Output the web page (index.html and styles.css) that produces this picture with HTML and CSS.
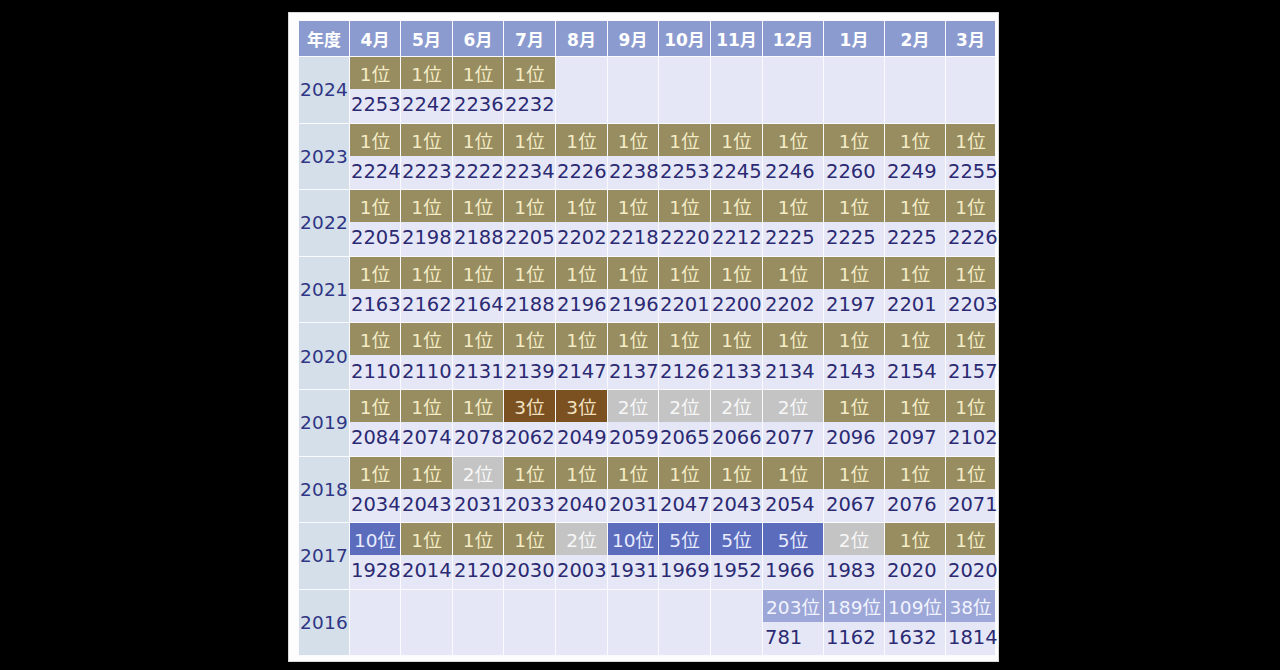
FILE: index.html
```html
<!DOCTYPE html>
<html lang="ja">
<head>
<meta charset="utf-8">
<title>順位表</title>
<link rel="stylesheet" href="styles.css">
</head>
<body>
<div class="panel">
<table class="rank">
<colgroup>
<col class="c-y"><col class="c-a"><col class="c-b"><col class="c-a"><col class="c-b"><col class="c-b"><col class="c-a"><col class="c-b"><col class="c-b"><col class="c-w"><col class="c-w"><col class="c-w"><col class="c-z">
</colgroup>
<thead>
<tr class="head"><th>年度</th><th>4月</th><th>5月</th><th>6月</th><th>7月</th><th>8月</th><th>9月</th><th>10月</th><th>11月</th><th>12月</th><th>1月</th><th>2月</th><th>3月</th></tr>
</thead>
<tbody>
<tr class="badges"><th class="year" rowspan="2">2024</th><td class="r1">1位</td><td class="r1">1位</td><td class="r1">1位</td><td class="r1">1位</td><td></td><td></td><td></td><td></td><td></td><td></td><td></td><td></td></tr>
<tr class="nums"><td>2253</td><td>2242</td><td>2236</td><td>2232</td><td></td><td></td><td></td><td></td><td></td><td></td><td></td><td></td></tr>

<tr class="badges"><th class="year" rowspan="2">2023</th><td class="r1">1位</td><td class="r1">1位</td><td class="r1">1位</td><td class="r1">1位</td><td class="r1">1位</td><td class="r1">1位</td><td class="r1">1位</td><td class="r1">1位</td><td class="r1">1位</td><td class="r1">1位</td><td class="r1">1位</td><td class="r1">1位</td></tr>
<tr class="nums"><td>2224</td><td>2223</td><td>2222</td><td>2234</td><td>2226</td><td>2238</td><td>2253</td><td>2245</td><td>2246</td><td>2260</td><td>2249</td><td>2255</td></tr>

<tr class="badges"><th class="year" rowspan="2">2022</th><td class="r1">1位</td><td class="r1">1位</td><td class="r1">1位</td><td class="r1">1位</td><td class="r1">1位</td><td class="r1">1位</td><td class="r1">1位</td><td class="r1">1位</td><td class="r1">1位</td><td class="r1">1位</td><td class="r1">1位</td><td class="r1">1位</td></tr>
<tr class="nums"><td>2205</td><td>2198</td><td>2188</td><td>2205</td><td>2202</td><td>2218</td><td>2220</td><td>2212</td><td>2225</td><td>2225</td><td>2225</td><td>2226</td></tr>

<tr class="badges"><th class="year" rowspan="2">2021</th><td class="r1">1位</td><td class="r1">1位</td><td class="r1">1位</td><td class="r1">1位</td><td class="r1">1位</td><td class="r1">1位</td><td class="r1">1位</td><td class="r1">1位</td><td class="r1">1位</td><td class="r1">1位</td><td class="r1">1位</td><td class="r1">1位</td></tr>
<tr class="nums"><td>2163</td><td>2162</td><td>2164</td><td>2188</td><td>2196</td><td>2196</td><td>2201</td><td>2200</td><td>2202</td><td>2197</td><td>2201</td><td>2203</td></tr>

<tr class="badges"><th class="year" rowspan="2">2020</th><td class="r1">1位</td><td class="r1">1位</td><td class="r1">1位</td><td class="r1">1位</td><td class="r1">1位</td><td class="r1">1位</td><td class="r1">1位</td><td class="r1">1位</td><td class="r1">1位</td><td class="r1">1位</td><td class="r1">1位</td><td class="r1">1位</td></tr>
<tr class="nums"><td>2110</td><td>2110</td><td>2131</td><td>2139</td><td>2147</td><td>2137</td><td>2126</td><td>2133</td><td>2134</td><td>2143</td><td>2154</td><td>2157</td></tr>

<tr class="badges"><th class="year" rowspan="2">2019</th><td class="r1">1位</td><td class="r1">1位</td><td class="r1">1位</td><td class="r3">3位</td><td class="r3">3位</td><td class="r2">2位</td><td class="r2">2位</td><td class="r2">2位</td><td class="r2">2位</td><td class="r1">1位</td><td class="r1">1位</td><td class="r1">1位</td></tr>
<tr class="nums"><td>2084</td><td>2074</td><td>2078</td><td>2062</td><td>2049</td><td>2059</td><td>2065</td><td>2066</td><td>2077</td><td>2096</td><td>2097</td><td>2102</td></tr>

<tr class="badges"><th class="year" rowspan="2">2018</th><td class="r1">1位</td><td class="r1">1位</td><td class="r2">2位</td><td class="r1">1位</td><td class="r1">1位</td><td class="r1">1位</td><td class="r1">1位</td><td class="r1">1位</td><td class="r1">1位</td><td class="r1">1位</td><td class="r1">1位</td><td class="r1">1位</td></tr>
<tr class="nums"><td>2034</td><td>2043</td><td>2031</td><td>2033</td><td>2040</td><td>2031</td><td>2047</td><td>2043</td><td>2054</td><td>2067</td><td>2076</td><td>2071</td></tr>

<tr class="badges"><th class="year" rowspan="2">2017</th><td class="r5">10位</td><td class="r1">1位</td><td class="r1">1位</td><td class="r1">1位</td><td class="r2">2位</td><td class="r5">10位</td><td class="r5">5位</td><td class="r5">5位</td><td class="r5">5位</td><td class="r2">2位</td><td class="r1">1位</td><td class="r1">1位</td></tr>
<tr class="nums"><td>1928</td><td>2014</td><td>2120</td><td>2030</td><td>2003</td><td>1931</td><td>1969</td><td>1952</td><td>1966</td><td>1983</td><td>2020</td><td>2020</td></tr>

<tr class="badges"><th class="year" rowspan="2">2016</th><td></td><td></td><td></td><td></td><td></td><td></td><td></td><td></td><td class="rx">203位</td><td class="rx">189位</td><td class="rx">109位</td><td class="rx">38位</td></tr>
<tr class="nums last"><td></td><td></td><td></td><td></td><td></td><td></td><td></td><td></td><td>781</td><td>1162</td><td>1632</td><td>1814</td></tr>
</tbody>
</table>
</div>
</body>
</html>
```

FILE: styles.css
```css
html, body {
  margin: 0;
  background: #000;
}

body {
  display: flex;
  align-items: flex-start;
  padding: 12px 0 0 288px;
  height: 670px;
  box-sizing: border-box;
  font-family: "DejaVu Sans", "Noto Sans CJK JP", sans-serif;
}

.panel {
  background: #fdfdfd;
  padding: 8px 3px 6px 10px;
  box-shadow: inset 0 0 0 1px #d8d8d8;
}

.rank {
  table-layout: fixed;
  width: 697px;
  border-collapse: collapse;
}

.c-y { width: 51px; }
.c-a { width: 51px; }
.c-b { width: 52px; }
.c-w { width: 61px; }
.c-z { width: 50px; }

.rank th,
.rank td {
  border: 1px solid #fbfbff;
  padding: 0;
  white-space: nowrap;
  overflow: visible;
}

.head th {
  height: 35px;
  background: #8c9bcf;
  color: #fff;
  font-weight: bold;
  font-size: 17px;
  text-align: center;
  vertical-align: middle;
}

.year {
  background: #d4dfea;
  color: #2f3684;
  font-weight: normal;
  font-size: 18.5px;
  text-align: center;
  vertical-align: middle;
  letter-spacing: 0.2px;
}

.badges td {
  height: 32px;
  border-bottom: 0;
  background: #e5e7f7;
  font-size: 18.5px;
  text-align: center;
  vertical-align: middle;
}

.nums td {
  height: 31.6px;
  border-top: 0;
  background: #e5e7f7;
  color: #2b2a72;
  font-size: 19.5px;
  text-align: left;
  padding-left: 1px;
  vertical-align: middle;
  padding-bottom: 2px;
}

.nums td:nth-child(n+9) {
  padding-left: 2px;
}

.badges td.r1 {
  background: #978d60;
  color: #f4ecc6;
}

.badges td.r2 {
  background: #c4c4c4;
  color: #f7f7f7;
}

.badges td.r3 {
  background: #7b5122;
  color: #f2e2c2;
}

.badges td.r5 {
  background: #5b6cbd;
  color: #e9ecff;
}

.badges td.rx {
  background: #9ca7d7;
  color: #f2f4ff;
}
```
